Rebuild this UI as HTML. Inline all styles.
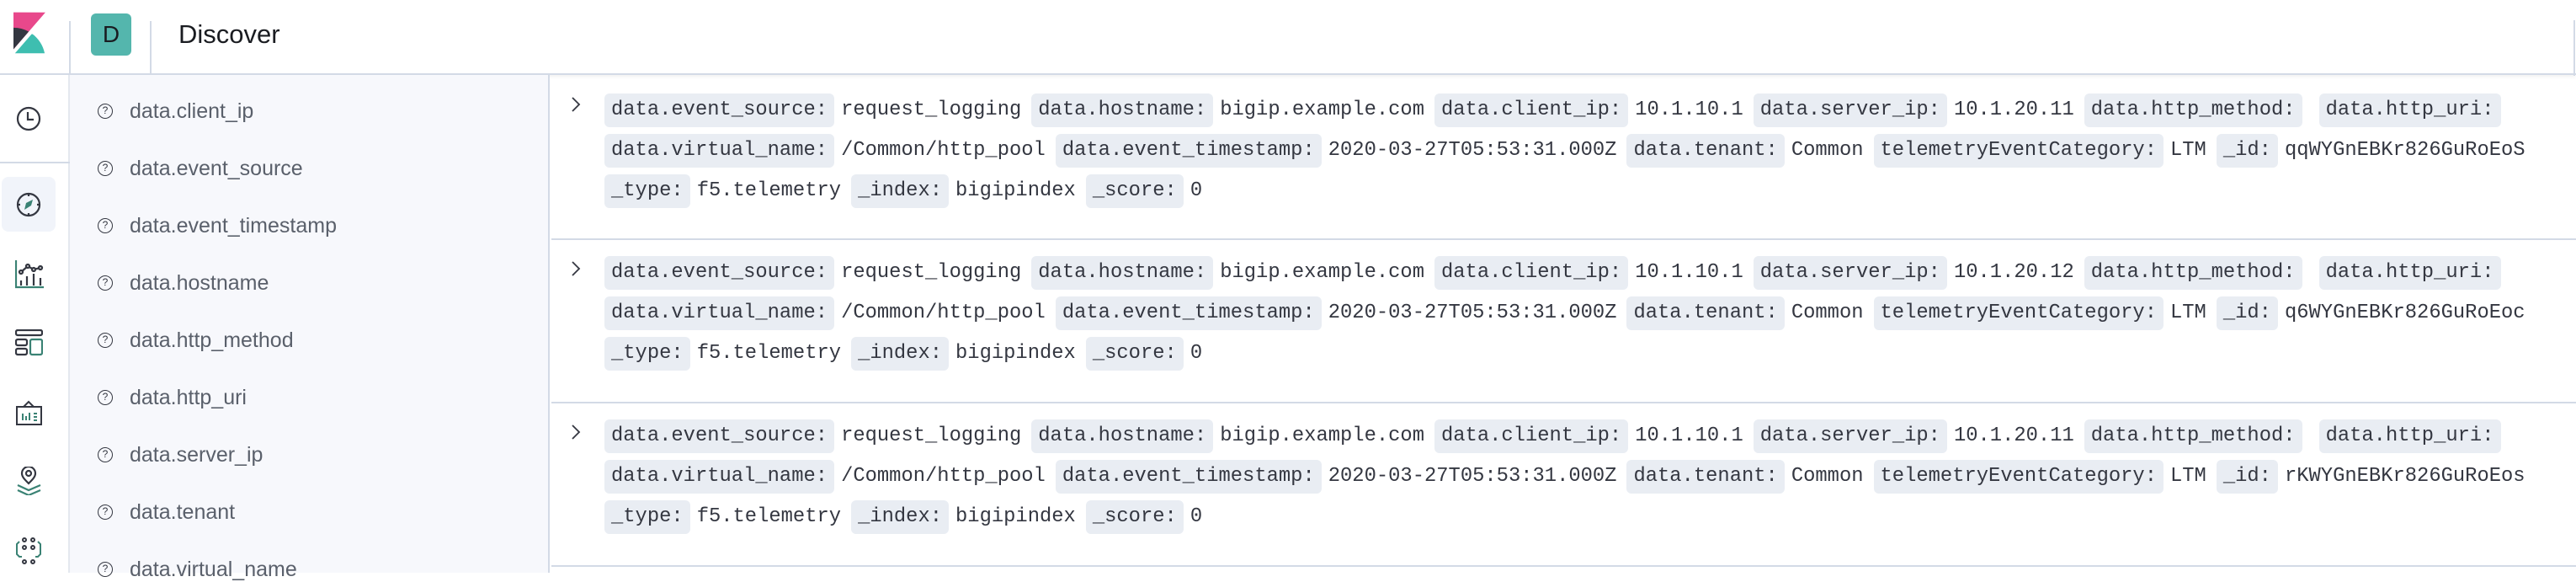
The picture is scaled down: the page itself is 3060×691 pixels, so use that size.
<!DOCTYPE html>
<html><head><meta charset="utf-8">
<style>
*{box-sizing:border-box;margin:0;padding:0}
body{width:3060px;height:680px;overflow:hidden;background:#fff;font-family:"Liberation Sans",sans-serif;position:relative}
.hdr{position:absolute;left:0;top:0;width:3060px;height:89px;background:#fff;border-bottom:2px solid #d3dae6;box-shadow:0 2px 4px rgba(0,0,0,.06)}
.vl{position:absolute;width:2px;background:#d3dae6}
.badge{position:absolute;left:108px;top:16px;width:48px;height:50px;background:#54b6ad;border-radius:6px;color:#1a1c21;font-size:28px;line-height:50px;text-align:center}
.title{position:absolute;left:212px;top:22px;font-size:31px;color:#1a1c21;line-height:38px}
.nav{position:absolute;left:0;top:89px;width:83px;height:591px;background:#fff;border-right:2px solid #e4e8ef}
.side{position:absolute;left:83px;top:89px;width:570px;height:591px;background:#f7f8fc;border-right:2px solid #d3dae6}
.item{position:absolute;left:71px;font-size:25px;color:#5a606b;line-height:30px}
.q{position:absolute;left:-38px;top:6px;width:18px;height:18px;border:1.6px solid #343741;border-radius:50%;font-size:12px;line-height:15px;text-align:center;color:#343741}
.row{position:absolute;left:655px;width:2405px;border-bottom:2px solid #d3dae6}
.chev{position:absolute;left:22px;top:24px}
.ln{position:absolute;left:63px;display:flex;white-space:pre;font-family:"Liberation Mono",monospace;font-size:23.8px;color:#343741;height:40px;line-height:40px}
.t{background:#e9edf3;border-radius:6px;padding:0 8px;margin-right:8px}
.v{margin-right:12px}
</style></head><body>
<div class="hdr"></div>
<svg style="position:absolute;left:16px;top:14px" width="38" height="50" viewBox="4 0 25 32"><path d="M4 0v28.789L28.935.017z" fill="#e8488b"/><path d="M4 12v16.789l11.906-13.738A24.721 24.721 0 004 12" fill="#343741"/><path d="M18.479 16.664L6.268 30.754l-1.073 1.237h23.191c-1.252-6.292-4.883-11.719-9.908-15.327" fill="#3ebeb0"/></svg>
<div class="vl" style="left:82px;top:25px;height:65px"></div>
<div class="badge">D</div>
<div class="vl" style="left:178px;top:25px;height:65px"></div>
<div class="title">Discover</div>
<div class="vl" style="left:3057px;top:24px;height:66px"></div>

<div class="nav">
<div style="position:absolute;left:0;top:103px;width:83px;height:2px;background:#d3dae6"></div>
<div style="position:absolute;left:2px;top:121px;width:64px;height:65px;background:#f1f4fa;border-radius:8px"></div>
</div>
<svg style="position:absolute;left:18px;top:125px" width="32" height="32" viewBox="0 0 32 32" fill="none" stroke="#343741" stroke-width="2.2"><circle cx="16" cy="16" r="13"/><path d="M15 8v9h7"/></svg>
<svg style="position:absolute;left:18px;top:227px" width="32" height="32" viewBox="0 0 32 32" fill="none" stroke="#343741" stroke-width="2.2"><circle cx="16" cy="16" r="13"/><path d="M16 3v3M16 26v3M3 16h3M26 16h3"/><path d="M21 10l-8 4-2 8 8-5z" fill="#3a8274" stroke="none"/></svg>
<svg style="position:absolute;left:18px;top:309px" width="34" height="34" viewBox="0 0 34 34" fill="none" stroke-width="2.2"><path d="M1 0v32h33" stroke="#3a8274"/><path d="M7 30v-6M14 30v-11M22 30v-14M30 30v-9" stroke="#343741"/><path d="M7 14l8-7 7 4 8-2" stroke="#343741"/><circle cx="7" cy="14" r="2" fill="#fff" stroke="#343741"/><circle cx="15" cy="7" r="2" fill="#fff" stroke="#343741"/><circle cx="22" cy="11" r="2" fill="#fff" stroke="#343741"/><circle cx="30" cy="9" r="2" fill="#fff" stroke="#343741"/></svg>
<svg style="position:absolute;left:18px;top:391px" width="33" height="32" viewBox="0 0 33 32" fill="none" stroke-width="2.2"><rect x="1" y="1" width="31" height="6" rx="2" stroke="#343741"/><rect x="1" y="12" width="13" height="7" rx="2" stroke="#343741"/><rect x="1" y="23" width="13" height="7" rx="2" stroke="#343741"/><rect x="18" y="12" width="14" height="18" rx="2" stroke="#3a8274"/></svg>
<svg style="position:absolute;left:18px;top:474px" width="33" height="32" viewBox="0 0 33 32" fill="none" stroke-width="2"><path d="M2 9h29v21H2z" stroke="#343741"/><path d="M10 9l6-6 6 6" stroke="#343741"/><path d="M9 25v-8M13 25v-5M17 25v-9M22 17h4M22 21h4M22 25h4" stroke="#3a8274"/></svg>
<svg style="position:absolute;left:18px;top:554px" width="33" height="34" viewBox="0 0 33 34" fill="none" stroke-width="2.2"><path d="M16 20c-5-5-8-8-8-12a8 8 0 0116 0c0 4-3 7-8 12z" stroke="#343741"/><circle cx="16" cy="8" r="3" stroke="#343741"/><path d="M3 22l13 6 14-6M3 28l13 6 14-6" stroke="#3a8274"/></svg>
<svg style="position:absolute;left:18px;top:638px" width="32" height="32" viewBox="0 0 32 32" fill="none" stroke-width="2"><circle cx="11" cy="3" r="2" stroke="#343741"/><circle cx="21" cy="3" r="2" stroke="#343741"/><circle cx="11" cy="12" r="2" stroke="#343741"/><circle cx="21" cy="12" r="2" stroke="#343741"/><circle cx="11" cy="29" r="2" stroke="#343741"/><circle cx="21" cy="29" r="2" stroke="#343741"/><path d="M5 5L2 8v12l3 3h3M27 5l3 3v12l-3 3h-3" stroke="#3a8274"/></svg>

<div class="side">
<div class="item" style="top:28px"><span class="q">?</span>data.client_ip</div>
<div class="item" style="top:96px"><span class="q">?</span>data.event_source</div>
<div class="item" style="top:164px"><span class="q">?</span>data.event_timestamp</div>
<div class="item" style="top:232px"><span class="q">?</span>data.hostname</div>
<div class="item" style="top:300px"><span class="q">?</span>data.http_method</div>
<div class="item" style="top:368px"><span class="q">?</span>data.http_uri</div>
<div class="item" style="top:436px"><span class="q">?</span>data.server_ip</div>
<div class="item" style="top:504px"><span class="q">?</span>data.tenant</div>
<div class="item" style="top:572px"><span class="q">?</span>data.virtual_name</div>
</div>

<div class="row" style="top:90px;height:195px">
<svg class="chev" width="14" height="20" viewBox="0 0 14 20" fill="none" stroke="#343741" stroke-width="1.8"><path d="M3 2l8 8-8 8"/></svg>
<div class="ln" style="top:21px"><span class="t">data.event_source:</span><span class="v">request_logging</span><span class="t">data.hostname:</span><span class="v">bigip.example.com</span><span class="t">data.client_ip:</span><span class="v">10.1.10.1</span><span class="t">data.server_ip:</span><span class="v">10.1.20.11</span><span class="t">data.http_method:</span><span class="v"></span><span class="t">data.http_uri:</span></div>
<div class="ln" style="top:69px"><span class="t">data.virtual_name:</span><span class="v">/Common/http_pool</span><span class="t">data.event_timestamp:</span><span class="v">2020-03-27T05:53:31.000Z</span><span class="t">data.tenant:</span><span class="v">Common</span><span class="t">telemetryEventCategory:</span><span class="v">LTM</span><span class="t">_id:</span><span class="v">qqWYGnEBKr826GuRoEoS</span></div>
<div class="ln" style="top:117px"><span class="t">_type:</span><span class="v">f5.telemetry</span><span class="t">_index:</span><span class="v">bigipindex</span><span class="t">_score:</span><span class="v">0</span></div>
</div>

<div class="row" style="top:285px;height:194px">
<svg class="chev" width="14" height="20" viewBox="0 0 14 20" fill="none" stroke="#343741" stroke-width="1.8"><path d="M3 2l8 8-8 8"/></svg>
<div class="ln" style="top:19px"><span class="t">data.event_source:</span><span class="v">request_logging</span><span class="t">data.hostname:</span><span class="v">bigip.example.com</span><span class="t">data.client_ip:</span><span class="v">10.1.10.1</span><span class="t">data.server_ip:</span><span class="v">10.1.20.12</span><span class="t">data.http_method:</span><span class="v"></span><span class="t">data.http_uri:</span></div>
<div class="ln" style="top:67px"><span class="t">data.virtual_name:</span><span class="v">/Common/http_pool</span><span class="t">data.event_timestamp:</span><span class="v">2020-03-27T05:53:31.000Z</span><span class="t">data.tenant:</span><span class="v">Common</span><span class="t">telemetryEventCategory:</span><span class="v">LTM</span><span class="t">_id:</span><span class="v">q6WYGnEBKr826GuRoEoc</span></div>
<div class="ln" style="top:115px"><span class="t">_type:</span><span class="v">f5.telemetry</span><span class="t">_index:</span><span class="v">bigipindex</span><span class="t">_score:</span><span class="v">0</span></div>
</div>

<div class="row" style="top:479px;height:194px">
<svg class="chev" width="14" height="20" viewBox="0 0 14 20" fill="none" stroke="#343741" stroke-width="1.8"><path d="M3 2l8 8-8 8"/></svg>
<div class="ln" style="top:19px"><span class="t">data.event_source:</span><span class="v">request_logging</span><span class="t">data.hostname:</span><span class="v">bigip.example.com</span><span class="t">data.client_ip:</span><span class="v">10.1.10.1</span><span class="t">data.server_ip:</span><span class="v">10.1.20.11</span><span class="t">data.http_method:</span><span class="v"></span><span class="t">data.http_uri:</span></div>
<div class="ln" style="top:67px"><span class="t">data.virtual_name:</span><span class="v">/Common/http_pool</span><span class="t">data.event_timestamp:</span><span class="v">2020-03-27T05:53:31.000Z</span><span class="t">data.tenant:</span><span class="v">Common</span><span class="t">telemetryEventCategory:</span><span class="v">LTM</span><span class="t">_id:</span><span class="v">rKWYGnEBKr826GuRoEos</span></div>
<div class="ln" style="top:115px"><span class="t">_type:</span><span class="v">f5.telemetry</span><span class="t">_index:</span><span class="v">bigipindex</span><span class="t">_score:</span><span class="v">0</span></div>
</div>
</body></html>
